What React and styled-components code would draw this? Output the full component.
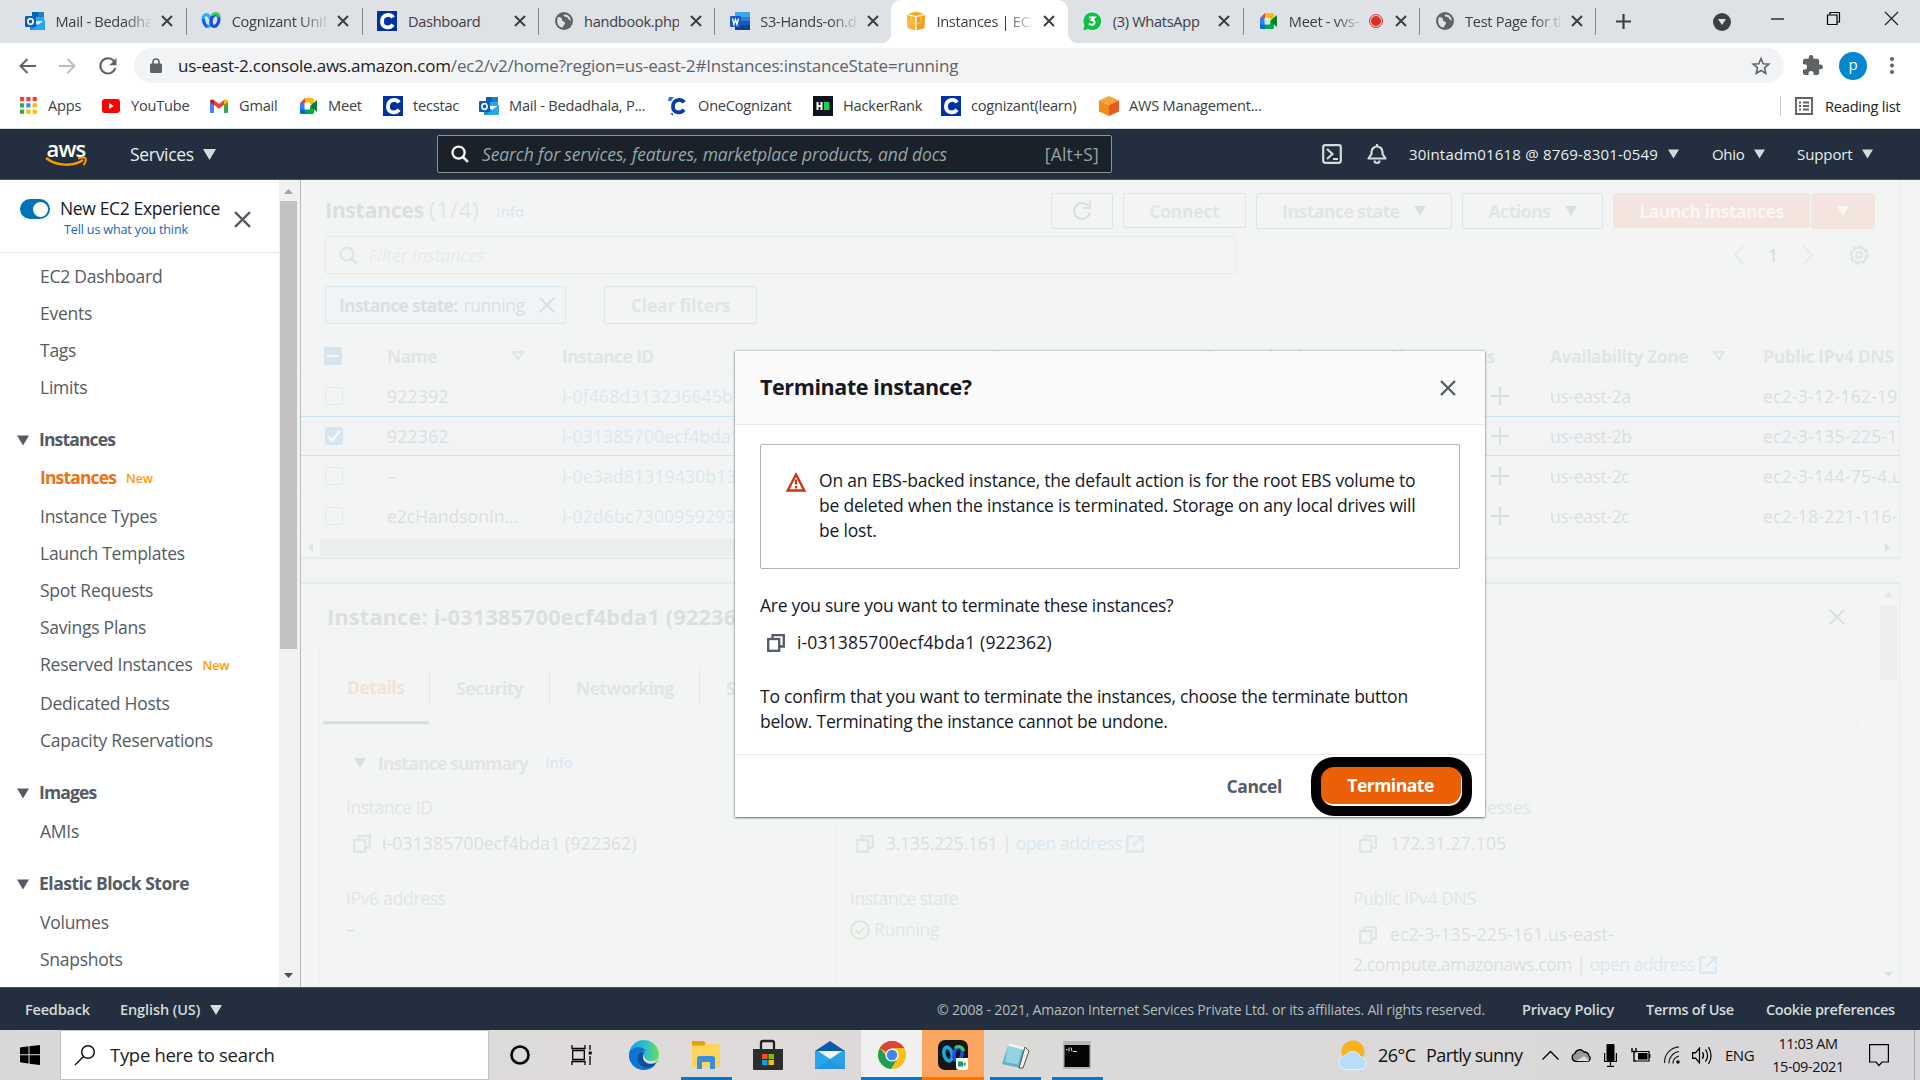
import React from "react";
import styled, { createGlobalStyle, css } from "styled-components";

const Global = createGlobalStyle`
  * { box-sizing: border-box; }
  html, body { margin: 0; padding: 0; }
  body { width: 1920px; height: 1080px; overflow: hidden; font-family: "Open Sans", "Noto Sans", sans-serif; }
  svg { display: block; flex: none; overflow: visible; }
`;

const Screen = styled.div`
  width: 1920px; height: 1080px; display: flex; flex-direction: column; overflow: hidden; background: #fff;
`;

const Text = styled.span`
  white-space: nowrap; flex: none; line-height: ${p => p.$lh || 24}px;
  font-size: ${p => p.$size || 17.5}px; font-weight: ${p => p.$w || 400};
  letter-spacing: ${p => p.$ls ?? -0.25}px;
  color: ${p => p.$c || "inherit"};
  margin-left: ${p => p.$ml || 0}px;
  ${p => p.$width && css`width: ${p.$width}px;`}
  ${p => p.$italic && css`font-style: italic;`}
`;

const Icon = ({ w = 20, h, vb, children, ...rest }) => (
  <svg width={w} height={h || w} viewBox={vb || `0 0 ${w} ${h || w}`} fill="none" {...rest}>{children}</svg>
);

const Caret = ({ c = "#d5dbdb", w = 12, h = 10 }) => (
  <Icon w={w} h={h} vb="0 0 12 10"><path d="M0 0h12L6 10z" fill={c} /></Icon>
);
const Cross = ({ s = 16, c = "#545b64", sw = 2.2 }) => (
  <Icon w={s} vb="0 0 16 16"><path d="M1 1l14 14M15 1L1 15" stroke={c} strokeWidth={sw} /></Icon>
);
const Magnifier = ({ c, s = 19 }) => (
  <Icon w={s} vb="0 0 19 19"><circle cx="8" cy="8" r="6.4" stroke={c} strokeWidth="2.4" /><path d="M12.5 12.5l5.3 5.3" stroke={c} strokeWidth="2.8" /></Icon>
);
const Copy = ({ c }) => (
  <Icon w={18} vb="0 0 18 18"><path d="M5.500 5V1.200h11.300v11.300h-4" stroke={c} strokeWidth="2.300" /><rect x="1.200" y="5" width="11" height="11.800" stroke={c} strokeWidth="2.300" /></Icon>
);
const External = ({ c }) => (
  <Icon w={18} vb="0 0 18 18"><path d="M7.500 1.300H1.300v15.400h15.400v-6.200M10.500 1.300h6.200v6.200M16 2L7 11" stroke={c} strokeWidth="2.300" /></Icon>
);

/* favicons */
const Outlook = () => (
  <Icon w={20}><path d="M7 1h12v9H7z" fill="#28a8ea" /><path d="M7 1h6v5H7z" fill="#0364b8" /><path d="M13 1h6v5h-6z" fill="#14447d" opacity=".4" /><path d="M5 9l8 5 7-5v10H5z" fill="#1490df" /><path d="M20 9L7 19h13z" fill="#28a8ea" /><rect y="5" width="11" height="11" rx="1" fill="#0a5fb4" /><ellipse cx="5.500" cy="10.500" rx="2.600" ry="2.900" stroke="#fff" strokeWidth="1.600" /></Icon>
);
const Webex = ({ s = 20 }) => (
  <Icon w={s} vb="0 0 20 20"><ellipse cx="6" cy="9.500" rx="3.800" ry="6" stroke="#1fb6f0" strokeWidth="3.200" transform="rotate(-14 6 9.500)" /><ellipse cx="14" cy="9.500" rx="3.800" ry="6" stroke="#1650e8" strokeWidth="3.200" transform="rotate(14 14 9.500)" /><path d="M11 4.500c2-3 6-3 7.500 1.500" stroke="#35d05a" strokeWidth="3" /><path d="M2.500 8c.5 4 1.500 7 4 7.500" stroke="#2456f5" strokeWidth="3" /></Icon>
);
const CBox = styled.div`
  width: 20px; height: 20px; flex: none; background: ${p => (p.$plain ? "transparent" : "#0033a1")};
  display: flex; align-items: center; justify-content: center;
`;
const Cogn = ({ plain }) => (
  <CBox $plain={plain}><Icon w={20}><path d="M16 6.500C14 2.800 5.500 2.500 5 10s8 7.800 11 3.600" stroke={plain ? "#0a3da8" : "#fff"} strokeWidth="3.800" />{plain && <path d="M1 1h5L3 5H0zM2 17h3v3z" fill="#2d6df6" />}</Icon></CBox>
);
const Globe = () => (
  <Icon w={18} vb="0 0 18 18"><circle cx="9" cy="9" r="9" fill="#5f6368" /><path d="M3 5c3 0 4 1 4 3s3 1 3 3-2 2-2 4.500C4 15.500 2 12 2.200 8zM9 2.500c-1 1.500 1 2.500 2.500 2.500s1 2 2.500 2.500 1.500 2 1.800 1.500C16 5 12.500 2 9 2.500z" fill="#dee1e6" /></Icon>
);
const Word = () => (
  <Icon w={20}><path d="M5 1h15v5H5z" fill="#41a5ee" /><path d="M5 6h15v4H5z" fill="#2b7cd3" /><path d="M5 10h15v4H5z" fill="#185abd" /><path d="M5 14h15v5H5z" fill="#103f91" /><rect y="5" width="11" height="11" rx="1" fill="#185abd" /><path d="M2.500 7.500l1.500 6 1.500-5 1.500 5 1.500-6" stroke="#fff" strokeWidth="1.300" /></Icon>
);
const Ec2Cube = () => (
  <Icon w={20}><path d="M2 3l8-2.500L18 3l-8 2z" fill="#f6a81c" /><path d="M1 4l8.500 2v13.500L1.500 17z" fill="#f5b43a" /><path d="M19 4l-8.500 2v13.500L18.500 17z" fill="#efa01a" /><path d="M10 6v13" stroke="#fff3d6" strokeWidth=".8" /><path d="M5 4.500v7l5 1.500 5-1.500v-7" stroke="#fbd487" strokeWidth=".7" /></Icon>
);
const Whats = () => (
  <Icon w={20}><path d="M.5 20l1.500-5.500A9.300 9.300 0 1 1 6 18.500z" fill="#0cc143" stroke="#fff" strokeWidth=".7" /><path d="M7 6.500h5.500L9.800 9c4 0 3.500 5-.3 4.700-1.300 0-2-.5-2.700-1.200" stroke="#fff" strokeWidth="1.900" /></Icon>
);
const MeetI = () => (
  <Icon w={19} h={18} vb="0 0 19 18"><path d="M1 6l5-5v5z" fill="#ea4335" /><path d="M6 1h7a2 2 0 0 1 2 2v4h-4V5.500H6z" fill="#fbbc04" /><path d="M1 6h4.500v7H1z" fill="#2684fc" /><path d="M1 12.500h5V17H2.500A1.500 1.500 0 0 1 1 15.500z" fill="#0066da" /><path d="M6 12.500h5V10h4v5.500a1.500 1.500 0 0 1-1.500 1.500H6z" fill="#00ac47" /><path d="M11 9l7-6v12z" fill="#00832d" /></Icon>
);
const AppsI = () => (
  <Icon w={17} vb="0 0 17 17">{["#ea4335", "#ea4335", "#ea4335", "#34a853", "#4285f4", "#fbbc04", "#34a853", "#fbbc04", "#fbbc04"].map((c, i) => (
    <rect key={i} x={(i % 3) * 6.300} y={Math.floor(i / 3) * 6.300} width="4.200" height="4.200" fill={c} />))}</Icon>
);
const YouTube = () => (<Icon w={18} h={14}><rect width="18" height="14" rx="3" fill="#f00" /><path d="M7 4l5 3-5 3z" fill="#fff" /></Icon>);
const Gmail = () => (<Icon w={18} h={14}><path d="M0 2h4v12H1a1 1 0 0 1-1-1z" fill="#4285f4" /><path d="M14 2h4v11a1 1 0 0 1-1 1h-3z" fill="#34a853" /><path d="M2 2l7 5.300L16 2" stroke="#ea4335" strokeWidth="3.800" /><path d="M0 1.500Q1 0 3 .8L4 2v4L0 3z" fill="#c5221f" /><path d="M18 1.500Q17 0 15 .8L14 2v4l4-3z" fill="#fbbc04" /></Icon>);
const Hacker = () => (<Icon w={20}><rect width="20" height="20" fill="#0e141e" /><path d="M4.500 6v8M8.500 6v8M4 10h5" stroke="#fff" strokeWidth="2" /><rect x="11" y="6" width="5.500" height="8" fill="#1ecf5a" /></Icon>);
const AwsCube = () => (<Icon w={20}><path d="M10 0l10 4.500-10 4.500L0 4.500z" fill="#f9a13a" /><path d="M0 4.500L10 9v11L0 15.500z" fill="#f58a1f" /><path d="M20 4.500L10 9v11l10-4.500z" fill="#ea5a1b" /></Icon>);

/* ---------- browser chrome ---------- */
const TabStrip = styled.div`height: 43px; flex: none; background: #dee1e6; display: flex; padding-left: 10.5px;`;
const Tab = styled.div`
  width: 176.2px; height: 43px; flex: none; display: flex; align-items: center; padding: 0 12.5px 1px 14.5px; position: relative;
  ${p => p.$active && css`background: #fff; border-radius: 10px 10px 0 0;
    &::before, &::after { content: ""; position: absolute; bottom: 0; width: 10px; height: 10px; }
    &::before { left: -10px; background: radial-gradient(circle at 0 0, transparent 10px, #fff 10.5px); }
    &::after { right: -10px; background: radial-gradient(circle at 100% 0, transparent 10px, #fff 10.5px); }`}
  ${p => p.$sep && css`border-right: 1px solid #85888c; border-image: linear-gradient(transparent 9px, #85888c 9px, #85888c 34px, transparent 34px) 1;`}
`;
const TabIcon = styled.div`width: 20px; margin-right: 10.5px; display: flex; justify-content: center; flex: none;`;
const TabTitle = styled.div`
  flex: 1; min-width: 0; overflow: hidden; white-space: nowrap; font-size: 14.6px; line-height: 22px; color: #3c4043; letter-spacing: -0.3px;
  ${p => p.$fade && css`mask-image: linear-gradient(90deg, #000 calc(100% - 26px), rgba(0, 0, 0, 0.12));`}
`;
const Recording = styled.div`width: 12px; height: 12px; margin: 0 2px 0 9px; border-radius: 50%; background: #d93025; border: 1px solid #f4d5d4; outline: 1.5px solid #d93025; flex: none;`;
const TabClose = styled.div`width: 12px; margin-left: 11px; flex: none;`;
const StripTail = styled.div`flex: 1; display: flex; align-items: center;`;
const At = styled.div`flex: none; margin-left: ${p => p.$ml || 0}px; margin-top: ${p => p.$mt || 0}px;`;

const tabs = [
  { i: <Outlook />, t: "Mail - Bedadhala", fade: 1, sep: 1 },
  { i: <Webex />, t: "Cognizant Unified", fade: 1, sep: 1 },
  { i: <Cogn />, t: "Dashboard", sep: 1 },
  { i: <Globe />, t: "handbook.php", sep: 1 },
  { i: <Word />, t: "S3-Hands-on.docx", fade: 1 },
  { i: <Ec2Cube />, t: "Instances | EC2 M", fade: 1, active: 1 },
  { i: <Whats />, t: "(3) WhatsApp", sep: 1 },
  { i: <MeetI />, t: "Meet - vvs-", fade: 1, rec: 1, sep: 1 },
  { i: <Globe />, t: "Test Page for the", fade: 1, sep: 1 },
];

const Toolbar = styled.div`height: 45px; flex: none; display: flex; align-items: center; padding-left: 19px;`;
const Omnibox = styled.div`
  width: 1650px; height: 35px; margin-left: 17px; border-radius: 18px; background: #f1f3f4; display: flex; align-items: center; padding: 0 14px 0 16px; flex: none;
`;
const Spacer = styled.div`flex: 1;`;
const Avatar = styled.div`width: 28px; height: 28px; border-radius: 50%; background: #0288d1; color: #fff; font-size: 15px; line-height: 25px; text-align: center; margin-left: 17px;`;
const Bookmarks = styled.div`height: 41px; flex: none; display: flex; align-items: center; padding: 0 0 5px 18px; border-bottom: 1px solid #dadce0;`;
const Bookmark = styled.div`width: ${p => p.$width}px; display: flex; align-items: center; gap: 10px; flex: none; color: #3c4043; ${Text} { margin-top: -1px; }`;
const BIcon = styled.div`width: 20px; display: flex; justify-content: center;`;
const VLine = styled.div`width: 1px; height: 20px; background: #c8cbce; margin-right: 14px;`;

const marks = [
  [<AppsI />, "Apps", 83], [<YouTube />, "YouTube", 108], [<Gmail />, "Gmail", 89], [<MeetI />, "Meet", 85],
  [<Cogn />, "tecstac", 96], [<Outlook />, "Mail - Bedadhala, P...", 189], [<Cogn plain />, "OneCognizant", 145],
  [<Hacker />, "HackerRank", 128], [<Cogn />, "cognizant(learn)", 158], [<AwsCube />, "AWS Management...", 200],
];

const Chrome = () => (
  <>
    <TabStrip>
      {tabs.map((t, k) => (
        <Tab key={k} $active={t.active} $sep={t.sep}>
          <TabIcon>{t.i}</TabIcon>
          <TabTitle $fade={t.fade}>{t.t}</TabTitle>
          {t.rec && <Recording />}
          <TabClose><Icon w={12}><path d="M1 1l10 10M11 1L1 11" stroke="#3c4043" strokeWidth="2" /></Icon></TabClose>
        </Tab>
      ))}
      <StripTail>
        <At $ml={19.5}><Icon w={15}><path d="M7.500 0v15M0 7.500h15" stroke="#3c4043" strokeWidth="2.200" /></Icon></At>
        <At $ml={82}><Icon w={18}><circle cx="9" cy="9" r="9" fill="#3c4043" /><path d="M5 6h8l-4 6z" fill="#dee1e6" /></Icon></At>
        <At $ml={40} $mt={-6}><Icon w={13} h={2}><path d="M0 1h13" stroke="#000" strokeWidth="1.200" /></Icon></At>
        <At $ml={43} $mt={-6}><Icon w={13}><path d="M.5 3h9.500v9.500H.5zM3 3V.5h9.500V10H10" stroke="#000" strokeWidth="1.200" /></Icon></At>
        <At $ml={45} $mt={-6}><Icon w={13}><path d="M0 0l13 13M13 0L0 13" stroke="#222" strokeWidth="1.200" /></Icon></At>
      </StripTail>
    </TabStrip>
    <Toolbar>
      <Icon w={17} h={16}><path d="M17 8H1.500M8.500 1L1.500 8l7 7" stroke="#5f6368" strokeWidth="2" /></Icon>
      <At $ml={23}><Icon w={17} h={16}><path d="M0 8h15.500M8.500 1l7 7-7 7" stroke="#bcbec0" strokeWidth="2" /></Icon></At>
      <At $ml={23}><Icon w={18}><path d="M14.800 4A7.600 7.600 0 1 0 16.300 11" stroke="#5f6368" strokeWidth="2.100" /><path d="M17.500 1v7.200h-7.200z" fill="#5f6368" /></Icon></At>
      <Omnibox>
        <Icon w={12} h={15}><rect y="5.500" width="12" height="9.500" rx="1.500" fill="#5f6368" /><path d="M3 6V4a3 3 0 0 1 6 0v2" stroke="#5f6368" strokeWidth="1.600" /></Icon>
        <Text $ml={16} $size={17} $ls={-0.2} $c="#202124">us-east-2.console.aws.amazon.com</Text>
        <Text $size={17} $ls={-0.2} $c="#5f6368">/ec2/v2/home?region=us-east-2#Instances:instanceState=running</Text>
        <Spacer />
        <Icon w={18}><path d="M9 1.500l2.200 5.200 5.600.5-4.300 3.700 1.300 5.500L9 13.500l-4.800 2.900 1.300-5.500L1.200 7.200l5.600-.5z" stroke="#5f6368" strokeWidth="1.600" /></Icon>
      </Omnibox>
      <At $ml={19}><Icon w={19} vb="2 2 20 20"><path fill="#5f6368" d="M20.500 11H19V7a2 2 0 0 0-2-2h-4V3.500a2.500 2.500 0 0 0-5 0V5H4a2 2 0 0 0-2 2v3.800h1.500a2.700 2.700 0 0 1 0 5.400H2V20a2 2 0 0 0 2 2h3.800v-1.500a2.700 2.700 0 0 1 5.400 0V22H17a2 2 0 0 0 2-2v-4h1.500a2.500 2.500 0 0 0 0-5z" /></Icon></At>
      <Avatar>p</Avatar>
      <At $ml={23}><Icon w={4} h={17}>{[2, 8.500, 15].map(y => <circle key={y} cx="2" cy={y} r="2" fill="#5f6368" />)}</Icon></At>
    </Toolbar>
    <Bookmarks>
      {marks.map(([i, t, w]) => <Bookmark key={t} $width={w}><BIcon>{i}</BIcon><Text $size={14.6} $ls={-0.22}>{t}</Text></Bookmark>)}
      <Spacer />
      <VLine />
      <Icon w={18}><path d="M1 1h16v16H1zM4 5.500h2M8 5.500h6M4 9h2M8 9h6M4 12.500h2M8 12.500h6" stroke="#5f6368" strokeWidth="1.900" /></Icon>
      <Text $size={14.6} $ls={-0.22} $ml={12} $width={95} $c="#202124">Reading list</Text>
    </Bookmarks>
  </>
);

/* ---------- aws header ---------- */
const Nav = styled.div`height: 51px; flex: none; background: #232f3e; border-bottom: 1px solid #4a5560; display: flex; align-items: center; padding-left: 45px; color: #fff;`;
const Logo = styled.div`width: 42px; display: flex; flex-direction: column; align-items: center; flex: none;`;
const LogoWord = styled.div`font-size: 22px; font-weight: 600; line-height: 16px; height: 17px; letter-spacing: -0.8px;`;
const SearchBox = styled.div`
  width: 675px; height: 38px; margin-left: 221px; background: #1a2129; border: 1px solid #879596; border-radius: 2px;
  display: flex; align-items: center; padding: 0 12px 0 13px; flex: none;
`;
const Header = () => (
  <Nav>
    <Logo><LogoWord>aws</LogoWord><Icon w={42} h={11}><path d="M1 1c10 8 27 9 37 2" stroke="#ff9900" strokeWidth="2.400" /><path d="M33 1.500c3-1 6.500-1 7.500-.300s0 4.500-2 7" stroke="#ff9900" strokeWidth="2" /></Icon></Logo>
    <Text $ml={43} $ls={-0.3} $w={500} $width={73} $c="#eaeded">Services</Text>
    <Caret w={13} h={11} />
    <SearchBox>
      <Magnifier c="#fff" s={18} />
      <Text $ml={13} $italic $ls={-0.12} $c="#95a5a6">Search for services, features, marketplace products, and docs</Text>
      <Spacer /><Text $ls={0.2} $c="#95a5a6">[Alt+S]</Text>
    </SearchBox>
    <At $ml={210}><Icon w={20}><rect x="1.200" y="1.200" width="17.600" height="17.600" rx="2" stroke="#d5dbdb" strokeWidth="2.200" /><path d="M5 5l5.500 5L5 15M11 15h5" stroke="#d5dbdb" strokeWidth="2.200" /></Icon></At>
    <At $ml={25}><Icon w={20}><path d="M10 0v3M1.500 14.500L4.500 10V8a5.500 5.500 0 0 1 11 0v2l3 4.500z" stroke="#d5dbdb" strokeWidth="2.200" strokeLinejoin="round" /><path d="M7.500 16.500a2.500 2.500 0 0 0 5 0" stroke="#d5dbdb" strokeWidth="2.200" /></Icon></At>
    <Text $ml={22} $size={15} $ls={0.18} $w={500} $width={259} $c="#eaeded">30intadm01618 @ 8769-8301-0549</Text><Caret w={11} />
    <Text $ml={33} $size={15} $ls={-0.3} $w={500} $width={42} $c="#eaeded">Ohio</Text><Caret w={11} />
    <Text $ml={32} $size={15} $ls={-0.1} $w={500} $width={65} $c="#eaeded">Support</Text><Caret w={11} />
  </Nav>
);

/* ---------- sidebar ---------- */
const Body = styled.div`height: 807px; flex: none; display: flex; position: relative; overflow: hidden; background: #f2f4f4;`;
const Side = styled.div`width: 279px; flex: none; background: #fff; color: #545b64; overflow: hidden;`;
const SideHead = styled.div`height: 73px; border-bottom: 1px solid #e4e8e8; display: flex; padding: 15px 0 0 20px; margin-bottom: 5px;`;
const Toggle = styled.div`width: 30px; height: 20px; border-radius: 10px; background: #0073bb; margin: 4px 10px 0 0; padding: 3px 2px 0 13px; &::after { content: ""; display: block; width: 15px; height: 15px; border-radius: 50%; background: #fff; }`;
const HeadText = styled.div`width: 174px; display: flex; flex-direction: column;`;
const Item = styled.div`height: ${p => (p.$new ? 39 : 37)}px; padding: 6px 0 0 40px; display: flex; gap: 10px;`;
const Group = styled.div`height: ${p => (p.$first ? 53 : 54)}px; padding: 21px 0 0 17px; display: flex; gap: 10px; svg { margin-top: 8px; }`;
const side = [
  "EC2 Dashboard", "Events", "Tags", "Limits", "#Instances", "!Instances", "Instance Types", "Launch Templates", "Spot Requests",
  "Savings Plans", "+Reserved Instances", "Dedicated Hosts", "Capacity Reservations", "#Images", "AMIs", "#Elastic Block Store", "Volumes", "Snapshots",
];
const Track = styled.div`
  width: 22px; flex: none; background: #f1f1f1; border-right: 1px solid #b4bdbe; display: flex; flex-direction: column; align-items: center; padding: 9px 3px 9px 1px;
`;
const Thumb = styled.div`width: 17px; height: 448px; margin-top: 7px; background: #c1c1c1;`;

const Sidebar = () => (
  <>
    <Side>
      <SideHead>
        <Toggle />
        <HeadText>
          <Text $c="#16191f" $ls={-0.35} $lh={26}>New EC2 Experience</Text>
          <Text $c="#1166bb" $size={12.500} $lh={18} $ml={4} $ls={-0.12}>Tell us what you think</Text>
        </HeadText>
        <At $mt={16}><Cross s={17} /></At>
      </SideHead>
      {side.map((s, k) => {
        if (s[0] === "#") return <Group key={s} $first={k === 4}><Caret c="#545b64" w={12} h={11} /><Text $w={700} $ls={s.length > 12 ? -0.5 : -0.85}>{s.slice(1)}</Text></Group>;
        const act = s[0] === "!", nw = act || s[0] === "+";
        return (
          <Item key={s} $new={nw}>
            <Text $ls={act ? -0.85 : -0.25} $w={act ? 700 : 400} $c={act ? "#ec7211" : undefined}>{nw ? s.slice(1) : s}</Text>
            {nw && <Text $size={12.500} $w={600} $c="#ff9900" $lh={28} $ls={-0.1}>New</Text>}
          </Item>
        );
      })}
    </Side>
    <Track>
      <Icon w={9} h={5}><path d="M0 5h9L4.500 0z" fill="#a3a3a3" /></Icon>
      <Thumb />
      <Spacer />
      <Icon w={9} h={5}><path d="M0 0h9L4.500 5z" fill="#505050" /></Icon>
    </Track>
  </>
);

/* ---------- dimmed content ---------- */
const T = "#dcdfe0", L = "#e2e5e5", B = "#d9e8f1", G = "#e8ebeb";
const Main = styled.div`flex: 1; min-width: 0; display: flex; flex-direction: column; color: ${T};`;
const Panel = styled.div`width: 1599px; height: 379px; background: #f3f5f4; border-right: 1px solid ${G}; border-bottom: 2px solid ${G}; overflow: hidden;`;
const Row = styled.div`display: flex; align-items: ${p => p.$align || "center"}; height: ${p => p.$h}px; padding-left: ${p => p.$pl || 0}px; margin-top: ${p => p.$mt || 0}px;`;
const Btn = styled.div`
  width: ${p => p.$width}px; height: ${p => p.$h || 35}px; margin-left: ${p => p.$ml || 0}px; flex: none; border: 1px solid ${p => p.$fill || "#e0e4e4"}; background: ${p => p.$fill || "transparent"};
  border-radius: 2px; display: flex; align-items: center; justify-content: center; gap: 14px; color: ${p => (p.$fill ? "#f8f5f3" : L)};
`;
const Filter = styled.div`width: 911px; height: 38px; border: 1px solid ${G}; border-radius: 2px; display: flex; align-items: center; padding-left: 13px;`;
const Token = styled.div`width: 241px; height: 38px; border: 1px solid ${B}; border-radius: 2px; background: #f1f4f6; display: flex; align-items: center; padding-left: 13px;`;
const Grid = styled.div`
  display: grid; grid-template-columns: 86px 175px 227px 201px 213px 185px 162px 213px 136px; align-items: center; height: ${p => p.$h}px;
  border-bottom: 1px solid ${p => (p.$on ? "#cfe4ee" : "#eff1f1")}; border-top: ${p => (p.$on ? "1px solid #cfe4ee" : "none")}; background: ${p => (p.$on ? "#f1f3f5" : "transparent")};
`;
const Check = styled.div`
  width: 18px; height: 18px; margin-left: ${p => (p.$head ? 23 : 24)}px; border-radius: 2px; border: 1px solid ${p => (p.$on ? "#d6e5ee" : "#e5e8e8")}; background: ${p => (p.$on ? "#d6e5ee" : "transparent")};
  display: flex; align-items: center; justify-content: center;
`;
const End = styled.div`display: flex; justify-content: flex-end; padding-right: ${p => p.$pr}px;`;
const HeadCell = styled.div`display: flex; align-items: center; justify-content: space-between; padding-right: ${p => p.$pr || 38}px;`;
const HScroll = styled.div`height: 17px; display: flex; align-items: center; padding: 0 9px 0 7px; justify-content: space-between;`;
const HThumb = styled.div`width: 1010px; height: 17px; background: #eceeee; margin: 0 auto 0 7px;`;

const SortTri = () => <Icon w={12} h={10}><path d="M1.200 1h9.600L6 8.500z" stroke={L} strokeWidth="2" /></Icon>;
const Bold = p => <Text $w={700} $ls={-0.6} $c={L} {...p} />;

const rows = [
  ["922392", "i-0f468d313236645b", "us-east-2a", "ec2-3-12-162-19"],
  ["922362", "i-031385700ecf4bda1", "us-east-2b", "ec2-3-135-225-1"],
  ["–", "i-0e3ad81319430b13", "us-east-2c", "ec2-3-144-75-4.u"],
  ["e2cHandsonIn…", "i-02d6bc7300959293", "us-east-2c", "ec2-18-221-116-"],
];
const Clip = styled.div`overflow: hidden; white-space: nowrap; display: flex;`;

const InstanceTable = () => (
  <Panel>
    <Row $h={35} $mt={13} $pl={24} $align="flex-start">
      <Text $size={21.500} $w={700} $ls={-0.45} $lh={34} $width={104}>Instances</Text>
      <Text $size={22} $ls={0.9} $lh={33} $width={67} $c={L}>(1/4)</Text>
      <Text $size={14.500} $w={600} $ls={0} $lh={38} $c={B} $width={555}>Info</Text>
      <Btn $width={62} $h={36}><Icon w={20}><path d="M16.500 5A8 8 0 1 0 18 11.500" stroke={T} strokeWidth="2" /><path d="M18 0v7h-7" stroke={T} strokeWidth="2" /></Icon></Btn>
      <Btn $width={123} $ml={10}><Bold $ls={-0.2}>Connect</Bold></Btn>
      <Btn $width={196} $ml={10} $h={36}><Bold $ls={-0.5}>Instance state</Bold><Caret c={T} /></Btn>
      <Btn $width={141} $ml={10} $h={36}><Bold $ls={-0.4}>Actions</Bold><Caret c={T} /></Btn>
      <Btn $width={197} $ml={10} $fill="#f3e5dd"><Bold $ls={-0.45} $c="#f9f6f4">Launch instances</Bold></Btn>
      <Btn $width={64} $ml={1} $h={36} $fill="#f3e5dd"><Caret c="#faf7f5" /></Btn>
    </Row>
    <Row $h={38} $mt={8} $pl={24}>
      <Filter><Magnifier c={L} /><Text $italic $ml={11} $ls={0.05} $c="#e8ebeb">Filter instances</Text></Filter>
      <At $ml={498}><Icon w={10} h={18}><path d="M9 0L1 9l8 9" stroke="#e5e8e8" strokeWidth="1.800" /></Icon></At>
      <Text $ml={24} $width={35} $w={600}>1</Text>
      <Icon w={10} h={18}><path d="M1 0l8 9-8 9" stroke="#e5e8e8" strokeWidth="1.800" /></Icon>
      <At $ml={36}><Icon w={20}><circle cx="10" cy="10" r="7.500" stroke={L} strokeWidth="2" /><circle cx="10" cy="10" r="9" stroke={L} strokeWidth="2" strokeDasharray="3.500 3.570" /><circle cx="10" cy="10" r="3" stroke={L} strokeWidth="2" /></Icon></At>
    </Row>
    <Row $h={38} $mt={12} $pl={24}>
      <Token><Bold $c={T} $ls={-0.73}>Instance state:</Bold><Text $ml={6} $ls={-0.4} $width={76}>running</Text><Cross c={T} s={16} sw={2} /></Token>
      <Btn $width={153} $ml={38} $h={38}><Bold $ls={-0.2}>Clear filters</Bold></Btn>
    </Row>
    <Row $h={13} />
    <Grid $h={39}>
      <Check $on $head><Icon w={12} h={2}><path d="M0 1h12" stroke="#f5f8f9" strokeWidth="2" /></Icon></Check>
      <HeadCell><Bold>Name</Bold><SortTri /></HeadCell>
      <HeadCell><Bold>Instance ID</Bold></HeadCell>
      <HeadCell><Bold>Instance state</Bold></HeadCell>
      <HeadCell><Bold>Instance type</Bold></HeadCell>
      <HeadCell><Bold $ls={-0.45}>Status check</Bold></HeadCell>
      <HeadCell><Bold $ls={-0.45}>Alarm status</Bold></HeadCell>
      <HeadCell><Bold $ls={-0.45}>Availability Zone</Bold><SortTri /></HeadCell>
      <Clip><Bold $ls={-0.35}>Public IPv4 DNS</Bold></Clip>
    </Grid>
    {rows.map(([n, id, az, dns], k) => (
      <Grid key={id} $on={k === 1} $h={40}>
        <Check $on={k === 1}>{k === 1 && <Icon w={14} h={12}><path d="M1 6.500l4 4L13 1" stroke="#f7fafb" strokeWidth="2.400" /></Icon>}</Check>
        <Text $ls={k === 3 ? 0 : 0.3}>{n}</Text><Text $ls={0.2} $c={B}>{id}</Text><span /><span /><span />
        <End $pr={41}><Icon w={18}><path d="M9 0v18M0 9h18" stroke={T} strokeWidth="2" /></Icon></End>
        <Text $ls={-0.35}>{az}</Text><Clip><Text $ls={0.25}>{dns}</Text></Clip>
      </Grid>
    ))}
    <Row $h={3} />
    <HScroll><Icon w={5} h={9}><path d="M5 0v9L0 4.500z" fill={L} /></Icon><HThumb /><Icon w={5} h={9}><path d="M0 0v9l5-4.500z" fill={T} /></Icon></HScroll>
  </Panel>
);

const Split = styled.div`flex: 1; margin-top: 23px; width: 1599px; border-top: 2px solid ${G}; border-right: 1px solid ${G}; background: #f3f5f4; display: flex; min-height: 0; overflow: hidden;`;
const SplitMain = styled.div`width: 1577px; flex: none; display: flex; flex-direction: column;`;
const Card = styled.div`margin-left: 18px; width: 1540px; flex: 1; border: 1px solid #eef0f0; border-bottom: none; min-height: 0;`;
const Tabs = styled.div`height: 75px; border-bottom: 1px solid #eef0f0; display: flex; padding: 19px 0 0 3px;`;
const DTab = styled.div`
  width: ${p => p.$width}px; height: 37px; flex: none; padding-left: ${p => p.$pl ?? 26}px; border-right: 1px solid #e6e9e9; display: flex; align-items: center;
`;
const FirstTab = styled.div`width: 106px; flex: none; height: 55px; border-bottom: 3px solid ${T}; padding: 0 0 0 24px; display: flex; align-items: flex-start; ${Text} { line-height: 36px; }`;
const Summary = styled.div`height: 57px; margin: 0 25px 0 27px; border-bottom: 1px solid #eff1f1; display: flex; align-items: center; padding: 20px 0 0 7px;`;
const Cols = styled.div`display: grid; grid-template-columns: 490px 503px 1fr; padding-left: 26px;`;
const Col = styled.div`height: 220px; padding: 13px 0 0 ${p => (p.$line ? 13 : 0)}px; ${p => p.$line && css`border-left: 1px solid #eef0f0;`}`;
const Line = styled.div`height: ${p => p.$h || 24}px; margin-top: ${p => p.$mt || 0}px; padding-left: ${p => p.$pl || 0}px; display: flex; align-items: center; svg { margin-top: 1px; }`;
const VTrack = styled.div`width: 20px; border-left: 1px solid #eff1f1; display: flex; flex-direction: column; align-items: center; padding: 8px 1px 10px 0;`;
const VThumb = styled.div`width: 17px; height: 75px; background: #eceeee; margin-top: 8px;`;

const Details = () => (
  <Split>
    <SplitMain>
      <Row $h={65} $pl={26}>
        <Text $size={21.500} $w={700} $ls={0.28} $width={1502}>Instance: i-031385700ecf4bda1 (922362)</Text>
        <Cross c={T} s={16} sw={1.900} />
      </Row>
      <Card>
        <Tabs>
          <FirstTab><Bold $ls={-0.5} $c="#f3e2da">Details</Bold></FirstTab>
          <DTab $width={1} $pl={0} />
          <DTab $width={120}><Bold $ls={-0.5}>Security</Bold></DTab>
          <DTab $width={150}><Bold $ls={-0.6}>Networking</Bold></DTab>
          <DTab $width={120}><Bold>Storage</Bold></DTab>
        </Tabs>
        <Summary><Caret c={T} w={12} /><Bold $ml={12} $ls={-0.8} $width={167}>Instance summary</Bold><Text $size={14.500} $w={600} $ls={0} $c={B}>Info</Text></Summary>
        <Cols>
          <Col>
            <Line><Text $c={L} $ls={-0.4}>Instance ID</Text></Line>
            <Line $mt={12} $pl={7}><Copy c={L} /><Text $ml={11} $ls={0.16}>i-031385700ecf4bda1 (922362)</Text></Line>
            <Line $mt={31}><Text $c={L} $ls={-0.3}>IPv6 address</Text></Line>
            <Line $mt={7}><Text>–</Text></Line>
          </Col>
          <Col $line>
            <Line><Text $c={L}>Public IPv4 address</Text></Line>
            <Line $mt={12} $pl={6}><Copy c={L} /><Text $ml={12} $ls={-0.18}>3.135.225.161 |&nbsp;</Text><Text $c={B} $ls={-0.4} $width={110}>open address</Text><External c={B} /></Line>
            <Line $mt={31}><Text $c={L} $ls={-0.4}>Instance state</Text></Line>
            <Line $mt={7}><Icon w={20}><circle cx="10" cy="10" r="8.800" stroke="#dce9dc" strokeWidth="2.200" /><path d="M5.500 10l3.500 3.500L14.500 7.500" stroke="#dce9dc" strokeWidth="2.200" /></Icon><Text $ml={4} $ls={-0.4} $c="#dde9de">Running</Text></Line>
          </Col>
          <Col $line>
            <Line><Text $c={L}>Private IPv4 addresses</Text></Line>
            <Line $mt={12} $pl={6}><Copy c={L} /><Text $ml={13} $ls={0.2}>172.31.27.105</Text></Line>
            <Line $mt={31}><Text $c={L} $ls={-0.35}>Public IPv4 DNS</Text></Line>
            <Line $mt={12} $pl={6}><Copy c={L} /><Text $ml={13} $ls={0.15}>ec2-3-135-225-161.us-east-</Text></Line>
            <Line $mt={6}><Text $ls={-0.4}>2.compute.amazonaws.com |&nbsp;</Text><Text $c={B} $ls={-0.5} $width={109}>open address</Text><External c={B} /></Line>
          </Col>
        </Cols>
      </Card>
    </SplitMain>
    <VTrack>
      <Icon w={9} h={5}><path d="M0 5h9L4.500 0z" fill={L} /></Icon><VThumb /><Spacer /><Icon w={9} h={5}><path d="M0 0h9L4.500 5z" fill={T} /></Icon>
    </VTrack>
  </Split>
);

/* ---------- modal ---------- */
const Modal = styled.div`
  position: absolute; left: 735px; top: 171px; width: 750px; height: 466px; background: #fff; color: #16191f; display: flex; flex-direction: column;
  box-shadow: 0 1px 2px #6d7f82, 0 0 2px rgba(90, 105, 110, 0.6);
`;
const MHead = styled.div`height: 74px; border-bottom: 1px solid #e4e9e9; background: #fafafa; display: flex; align-items: center; justify-content: space-between; padding: 0 29px 0 25px; ${Text} { margin-top: -2px; }`;
const MBody = styled.div`height: 329px; padding: 19px 25px 0;`;
const Alert = styled.div`height: 125px; border: 1px solid #aab7b8; border-radius: 2px; padding: 23px 0 0 25px; display: flex; gap: 13px; svg { margin-top: 4px; }`;
const Para = styled.div`font-size: 17.5px; line-height: 25px; letter-spacing: ${p => p.$ls || -0.2}px; white-space: pre; margin-top: ${p => p.$mt || 0}px;`;
const MFoot = styled.div`flex: 1; border-top: 1px solid #e4e9e9; display: flex; justify-content: flex-end; align-items: center; padding-right: 13px; color: #545b64;`;
const Terminate = styled.div`
  width: 161px; height: 59px; border: 10px solid #000; border-radius: 23px; margin-left: 29px; background: #eb5f07; box-shadow: inset -1px -2px 0 #fff;
  display: flex; align-items: center; justify-content: center; color: #fff; padding: 0 2px 3px 0;
`;
const Confirm = () => (
  <Modal>
    <MHead><Text $size={21.500} $w={700} $ls={-0.4}>Terminate instance?</Text><Cross s={16} sw={2.300} /></MHead>
    <MBody>
      <Alert>
        <Icon w={20}><path d="M10 2.500L18.300 18.500H1.700z" stroke="#d13212" strokeWidth="2.400" /><path d="M10 7.500v5M10 14v2.500" stroke="#d13212" strokeWidth="2.200" /></Icon>
        <Para>{"On an EBS-backed instance, the default action is for the root EBS volume to\nbe deleted when the instance is terminated. Storage on any local drives will\nbe lost."}</Para>
      </Alert>
      <Para $mt={24} $ls={-0.27}>Are you sure you want to terminate these instances?</Para>
      <Line $mt={12} $pl={7}><Copy c="#545b64" /><Text $ml={12} $ls={0.16}>i-031385700ecf4bda1 (922362)</Text></Line>
      <Para $mt={30} $ls={-0.24}>{"To confirm that you want to terminate the instances, choose the terminate button\nbelow. Terminating the instance cannot be undone."}</Para>
    </MBody>
    <MFoot><Text $w={700} $ls={-0.4}>Cancel</Text><Terminate><Text $w={700} $ls={-0.5}>Terminate</Text></Terminate></MFoot>
  </Modal>
);

/* ---------- footer & taskbar ---------- */
const Foot = styled.div`height: 43px; flex: none; background: #232f3e; border-top: 1px solid #4a5560; display: flex; align-items: center; padding: 1px 25px 0; color: #d5dbdb;`;
const Taskbar = styled.div`height: 50px; flex: none; background: linear-gradient(90deg, #d9d7da, #dedbda 30%, #dad8d9 80%, #d8d6da); display: flex; align-items: center; color: #111;`;
const Start = styled.div`width: 60px; display: flex; justify-content: center; flex: none;`;
const WinSearch = styled.div`width: 429px; height: 50px; background: #fff; border: 1px solid #c4c2c4; display: flex; align-items: center; padding-left: 14px; flex: none;`;
const Task = styled.div`
  width: ${p => p.$width || 62}px; height: 50px; flex: none; display: flex; align-items: center; justify-content: center; position: relative; background: ${p => p.$bg || "transparent"};
  ${p => p.$bar && css`&::after { content: ""; position: absolute; bottom: 0; height: 3px; width: ${p.$full ? "100%" : "51px"}; background: ${p.$bar}; }`}
`;
const Clock = styled.div`width: 82px; margin-left: 13px; display: flex; flex-direction: column; align-items: center; gap: 1px;`;
const Peek = styled.div`width: 1px; height: 50px; background: #a9a8aa; margin-left: 25px;`;

const Taskbars = () => (
  <Taskbar>
    <Start><Icon w={20}><path d="M0 2.500l8.500-1.200v8H0zM9.500 1.200L20 0v9.300H9.500zM0 10.300h8.500v8.200L0 17.300zM9.500 10.300H20V20L9.500 18.700z" fill="#000" /></Icon></Start>
    <WinSearch>
      <Icon w={20}><circle cx="13" cy="7" r="6.300" stroke="#111" strokeWidth="1.500" /><path d="M8.500 11.500L0 20" stroke="#111" strokeWidth="1.500" /></Icon>
      <Text $size={18.500} $ml={15} $ls={-0.3} $c="#222">Type here to search</Text>
    </WinSearch>
    <Task><Icon w={20}><circle cx="10" cy="10" r="8.500" stroke="#000" strokeWidth="2.600" /></Icon></Task>
    <Task><Icon w={20}><path d="M0 0v3.500h13V0M0 20v-3.500h13V20M.7 5.500h11.600v9H.7zM18 0v5M18 11v9" stroke="#000" strokeWidth="1.300" /><rect x="16.700" y="6.500" width="3" height="3" fill="#000" /></Icon></Task>
    <Task>
      <Icon w={30}><defs><linearGradient id="eg" x1="0" x2="1"><stop offset="0" stopColor="#1b9de2" /><stop offset=".6" stopColor="#35c1c4" /><stop offset="1" stopColor="#6be14b" /></linearGradient></defs>
        <circle cx="15" cy="15" r="15" fill="url(#eg)" /><path d="M0 14C1 6 14 5 17 11c-6 0-8 5-4 10 3 4 9 5 14 2-3 6-9 7-13 7A15 15 0 0 1 0 14z" fill="#0f74d1" /><path d="M10 14c-4 7 2 16 12 13 3-1 5-4 5-5-6 3-12 1-13-5-.3-2 0-3 1.500-5-2 0-4 .5-5.500 2z" fill="#0c4f9e" /><path d="M15.500 12c-2 4 1 9 6 9 4 0 8-1 8.300-5l.2 2-4 5c-5 2-11 0-12-5z" fill="#dcdad9" /></Icon>
    </Task>
    <Task $bar="#0078d7"><Icon w={28} h={28}><path d="M0 0h12l2 3h14v24H0z" fill="#ffd35c" /><path d="M0 0h12l1.500 2.500L12 4.500H0z" fill="#e8a200" /><path d="M5 28V17.500a2.500 2.500 0 0 1 2.500-2.500h13a2.500 2.500 0 0 1 2.500 2.500V28h-5v-7h-8v7z" fill="#3b8ede" /></Icon></Task>
    <Task><Icon w={30}><path d="M8 10V3a2 2 0 0 1 2-2h9a2 2 0 0 1 2 2v7" stroke="#222" strokeWidth="2.300" /><path d="M0 9h30v20a1 1 0 0 1-1 1H1a1 1 0 0 1-1-1z" fill="#2d2d2d" /><path d="M9 14h5.500v5H9z" fill="#f25022" /><path d="M15.500 14H21v5h-5.500z" fill="#7fba00" /><path d="M9 20h5.500v5H9z" fill="#00a4ef" /><path d="M15.500 20H21v5h-5.500z" fill="#ffb900" /></Icon></Task>
    <Task><Icon w={30} h={28}><path d="M0 10L15 0l15 10z" fill="#0a5cab" /><path d="M0 10h30v18H0z" fill="#29a5ea" /><path d="M0 10l30 18V10L15 19z" fill="#47b9f0" /><path d="M0 28L30 10v18z" fill="#1a8bd8" opacity=".55" /><path d="M3 10h24l-12 8z" fill="#f3f6f8" /></Icon></Task>
    <Task $width={61} $bg="#f0f0f1" $bar="#0078d7" $full>
      <Icon w={28}><circle cx="14" cy="14" r="14" fill="#fbc116" /><path d="M14 14L1.900 7A14 14 0 0 1 26.100 7z" fill="#db4437" /><path d="M14 14H26.500V7.500A14 14 0 0 0 14 7z" fill="#fbc116" /><path d="M1.900 7A14 14 0 0 0 13 28l6-10-5-4-5.500 1.500z" fill="#1e9d58" /><path d="M26.100 7H14l-5 4L1.900 7A14 14 0 0 1 26.100 7z" fill="#db4437" /><circle cx="14" cy="14" r="6.600" fill="#f3f3f3" /><circle cx="14" cy="14" r="5.200" fill="#4285f4" /></Icon>
    </Task>
    <Task $bg="#fba560" $bar="#ff7300" $full>
      <Icon w={30}><rect width="30" height="30" rx="7" fill="#161616" /><g transform="translate(2 5)"><ellipse cx="8" cy="9" rx="4" ry="7" stroke="#12a8e0" strokeWidth="3.500" transform="rotate(-14 8 9)" /><ellipse cx="18" cy="9" rx="4" ry="7" stroke="#1d4ff0" strokeWidth="3.500" transform="rotate(14 18 9)" /><path d="M15 3c3-3 8-1 8.500 3" stroke="#35d05a" strokeWidth="3" /></g><path d="M18 18h12v12H21a3 3 0 0 1-3-3z" fill="#fff" /><path d="M20 21.500h5v5h-5zM25 24l2.500-2v4.500z" fill="#129b6b" /></Icon>
    </Task>
    <Task $bar="#0078d7"><Icon w={28} h={27}><path d="M8 1l16 4-5 21L1 22z" fill="#62b2c5" /><path d="M8 1l16 4-1 3L7 4z" fill="#eef4f5" /><path d="M24 5l4 4-6 17h-4z" fill="#f2efe4" stroke="#4b5052" strokeWidth="1" /><path d="M7 4l14 3.500-4 15L4 20z" fill="#9fdbe8" opacity=".8" /></Icon></Task>
    <Task $bar="#0078d7"><Icon w={28} h={28}><rect width="28" height="28" fill="#b5b8bb" /><rect x="1.500" y="4" width="25" height="22" fill="#050505" /><path d="M3 8.500h1.500M6 6.500v4M8 6.500l1 4M10 10.500h4" stroke="#ddd" strokeWidth="1" /></Icon></Task>
    <Spacer />
    <Icon w={28} h={30}><circle cx="14" cy="12" r="11.500" fill="#fbb020" /><path d="M7 29.500a7 7 0 0 1-.5-14 8 8 0 0 1 14.500 1 6.600 6.600 0 0 1 .5 13z" fill="#b5dff8" stroke="#e9f6fd" strokeWidth=".8" /></Icon>
    <Text $ml={11} $size={18} $ls={-0.5} $width={48}>26°C</Text>
    <Text $size={18} $ls={-0.6} $width={109}>Partly sunny</Text>
    <At $ml={7}><Icon w={17} h={9}><path d="M.5 8.500l8-8 8 8" stroke="#000" strokeWidth="1.400" /></Icon></At>
    <At $ml={12}><Icon w={20} h={14}><path d="M5 13.300a4 4 0 0 1-1-7.800A5 5 0 0 1 13 4a5 5 0 0 1 5 4 3 3 0 0 1-1 5.300z" fill="#999" stroke="#000" strokeWidth="1.300" /><path d="M5 13l8-5 5 4.500-1 .8z" fill="#ddd" /></Icon></At>
    <At $ml={13}><Icon w={13} h={23}><rect x="2.500" width="8" height="17" rx="1" fill="#000" /><path d="M.6 9v8.500h11.800V9M6.500 17.500v4M3 22.300h7" stroke="#000" strokeWidth="1.200" /></Icon></At>
    <At $ml={14}><Icon w={20} h={14}><path d="M5 3.500h13v9.500H5M18.800 6v4" stroke="#000" strokeWidth="1.200" /><path d="M7 5h9.500v6.500H7z" fill="#000" /><path d="M1 0v3.500h4V0M3 3.500V13h2" stroke="#000" strokeWidth="1.400" /></Icon></At>
    <At $ml={13}><Icon w={16} h={18}><path d="M.6 17A15.400 15.400 0 0 1 15 .8M5 17.500A11.500 11.500 0 0 1 15 5.500M9 17.500a7 7 0 0 1 6-7.300" stroke="#222" strokeWidth="1.200" /><circle cx="14" cy="16" r="1.700" fill="#000" /></Icon></At>
    <At $ml={12}><Icon w={21} h={19} vb="0 0 21 17" preserveAspectRatio="none"><path d="M.6 6h3L7.500 2v13L3.600 11h-3zM10.500 5.500q2 3 0 6M13.500 3q4 5.500 0 11M16.500 1q5 7.500 0 15" stroke="#000" strokeWidth="1.200" /></Icon></At>
    <Text $size={15} $ml={12} $ls={-0.5} $width={29}>ENG</Text>
    <Clock><Text $size={14.500} $ls={-0.5} $lh={22}>11:03 AM</Text><Text $size={14.500} $ls={-0.4} $lh={22}>15-09-2021</Text></Clock>
    <At $ml={20}><Icon w={20} h={22}><path d="M.6.6h18.800v17.400H13l-3 3.500-3-3.500H.6z" stroke="#000" strokeWidth="1.200" /></Icon></At>
    <Peek /><At $ml={5} />
  </Taskbar>
);

export default function App() {
  return (
    <Screen>
      <Global />
      <Chrome />
      <Header />
      <Body>
        <Sidebar />
        <Main><InstanceTable /><Details /></Main>
        <Confirm />
      </Body>
      <Foot>
        <Text $size={14.500} $w={600} $ls={-0.2} $width={95}>Feedback</Text>
        <Text $size={14.500} $w={600} $ls={-0.1} $width={90}>English (US)</Text><Caret />
        <Spacer />
        <Text $size={14} $ls={-0.19} $c="#b3bbbd" $width={585}>© 2008 - 2021, Amazon Internet Services Private Ltd. or its affiliates. All rights reserved.</Text>
        <Text $size={14.500} $w={600} $ls={-0.2} $width={124}>Privacy Policy</Text>
        <Text $size={14.500} $w={600} $ls={-0.3} $width={120}>Terms of Use</Text>
        <Text $size={14.500} $w={600} $ls={-0.35} $width={129}>Cookie preferences</Text>
      </Foot>
      <Taskbars />
    </Screen>
  );
}
